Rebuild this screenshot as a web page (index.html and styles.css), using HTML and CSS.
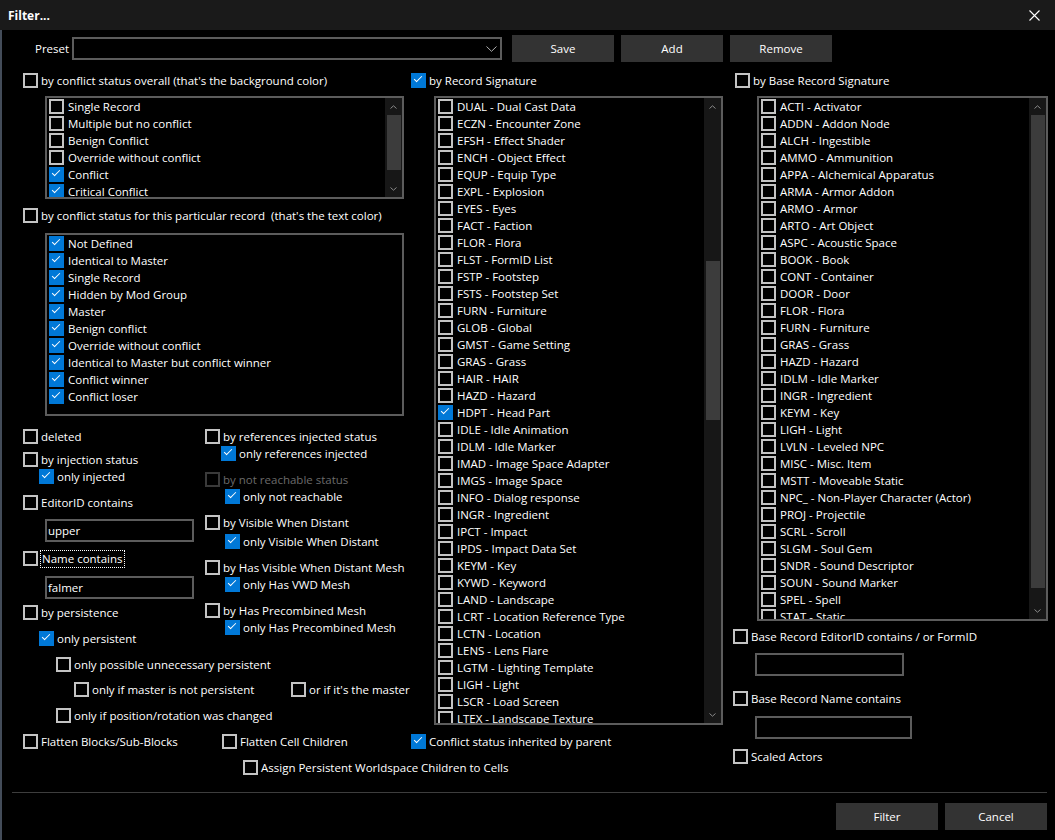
FILE: index.html
```html
<!DOCTYPE html>
<html lang="en">

<head>
    <meta charset="UTF-8">
    <title>Filter...</title>
    <link rel="stylesheet" href="styles.css">
</head>

<body>
<div class="window">
    <div class="titlebar">
        <span class="title">Filter...</span>
        <svg class="close" width="11" height="11" viewBox="0 0 11 11"><path d="M0.5 0.5L10.5 10.5M10.5 0.5L0.5 10.5" stroke="#fff" stroke-width="1.1"/></svg>
    </div>

    <div class="content">
        <div class="preset-row">
            <span class="preset-label">Preset</span>
            <div class="combo">
                <svg width="11" height="6" viewBox="0 0 11 6"><path d="M0.5 0.5L5.5 5.3L10.5 0.5" fill="none" stroke="#b0b0b0" stroke-width="1"/></svg>
            </div>
            <button class="btn first">Save</button>
            <button class="btn">Add</button>
            <button class="btn">Remove</button>
        </div>

        <div class="columns">
            <!-- conflict status column -->
            <div class="col col-status">
                <div class="cb"><span class="box"></span>by conflict status overall (that's the background color)</div>
                <div class="list list-overall">
                    <div class="items">
                        <div class="item"><span class="box"></span>Single Record</div>
                        <div class="item"><span class="box"></span>Multiple but no conflict</div>
                        <div class="item"><span class="box"></span>Benign Conflict</div>
                        <div class="item"><span class="box"></span>Override without conflict</div>
                        <div class="item"><span class="box on"></span>Conflict</div>
                        <div class="item"><span class="box on"></span>Critical Conflict</div>
                    </div>
                    <div class="scrollbar">
                        <div class="arrow"><svg width="7" height="4" viewBox="0 0 7 4"><path d="M0.5 3.5L3.5 0.8L6.5 3.5" fill="none" stroke="#8a8a8a"/></svg></div>
                        <div class="track"><div class="thumb" style="margin-top:0;height:55px"></div></div>
                        <div class="arrow"><svg width="7" height="4" viewBox="0 0 7 4"><path d="M0.5 0.5L3.5 3.2L6.5 0.5" fill="none" stroke="#8a8a8a"/></svg></div>
                    </div>
                </div>

                <div class="cb mt-8"><span class="box"></span>by conflict status for this particular record&nbsp; (that's the text color)</div>
                <div class="list list-record">
                    <div class="items">
                        <div class="item"><span class="box on"></span>Not Defined</div>
                        <div class="item"><span class="box on"></span>Identical to Master</div>
                        <div class="item"><span class="box on"></span>Single Record</div>
                        <div class="item"><span class="box on"></span>Hidden by Mod Group</div>
                        <div class="item"><span class="box on"></span>Master</div>
                        <div class="item"><span class="box on"></span>Benign conflict</div>
                        <div class="item"><span class="box on"></span>Override without conflict</div>
                        <div class="item"><span class="box on"></span>Identical to Master but conflict winner</div>
                        <div class="item"><span class="box on"></span>Conflict winner</div>
                        <div class="item"><span class="box on"></span>Conflict loser</div>
                    </div>
                </div>

                <div class="options">
                    <div class="opt-left">
                        <div class="cb"><span class="box"></span>deleted</div>
                        <div class="cb mt-6"><span class="box"></span>by injection status</div>
                        <div class="cb in-16"><span class="box on"></span>only injected</div>
                        <div class="cb mt-9"><span class="box"></span>EditorID contains</div>
                        <div class="field mt-8">upper</div>
                        <div class="cb mt-8"><span class="box"></span><span class="focus">Name contains</span></div>
                        <div class="field mt-9">falmer</div>
                        <div class="cb mt-5"><span class="box"></span>by persistence</div>
                        <div class="cb mt-9 in-16"><span class="box on"></span>only persistent</div>
                        <div class="cb mt-9 in-33"><span class="box"></span>only possible unnecessary persistent</div>
                        <div class="pair mt-8 in-51">
                            <div class="cb pair-first"><span class="box"></span>only if master is not persistent</div>
                            <div class="cb"><span class="box"></span>or if it's the master</div>
                        </div>
                        <div class="cb mt-9 in-33"><span class="box"></span>only if position/rotation was changed</div>
                    </div>
                    <div class="opt-right">
                        <div class="cb"><span class="box"></span>by references injected status</div>
                        <div class="cb in-16"><span class="box on"></span>only references injected</div>
                        <div class="cb mt-9 disabled"><span class="box"></span>by not reachable status</div>
                        <div class="cb in-20"><span class="box on"></span>only not reachable</div>
                        <div class="cb mt-9"><span class="box"></span>by Visible When Distant</div>
                        <div class="cb mt-2 in-20"><span class="box on"></span>only Visible When Distant</div>
                        <div class="cb mt-9"><span class="box"></span>by Has Visible When Distant Mesh</div>
                        <div class="cb in-20"><span class="box on"></span>only Has VWD Mesh</div>
                        <div class="cb mt-9"><span class="box"></span>by Has Precombined Mesh</div>
                        <div class="cb in-20"><span class="box on"></span>only Has Precombined Mesh</div>
                    </div>
                </div>
            </div>

            <!-- record signature column -->
            <div class="col col-sig">
                <div class="cb"><span class="box on"></span>by Record Signature</div>
                <div class="list list-sig">
                    <div class="items">
                        <div class="item"><span class="box"></span>DUAL - Dual Cast Data</div>
                        <div class="item"><span class="box"></span>ECZN - Encounter Zone</div>
                        <div class="item"><span class="box"></span>EFSH - Effect Shader</div>
                        <div class="item"><span class="box"></span>ENCH - Object Effect</div>
                        <div class="item"><span class="box"></span>EQUP - Equip Type</div>
                        <div class="item"><span class="box"></span>EXPL - Explosion</div>
                        <div class="item"><span class="box"></span>EYES - Eyes</div>
                        <div class="item"><span class="box"></span>FACT - Faction</div>
                        <div class="item"><span class="box"></span>FLOR - Flora</div>
                        <div class="item"><span class="box"></span>FLST - FormID List</div>
                        <div class="item"><span class="box"></span>FSTP - Footstep</div>
                        <div class="item"><span class="box"></span>FSTS - Footstep Set</div>
                        <div class="item"><span class="box"></span>FURN - Furniture</div>
                        <div class="item"><span class="box"></span>GLOB - Global</div>
                        <div class="item"><span class="box"></span>GMST - Game Setting</div>
                        <div class="item"><span class="box"></span>GRAS - Grass</div>
                        <div class="item"><span class="box"></span>HAIR - HAIR</div>
                        <div class="item"><span class="box"></span>HAZD - Hazard</div>
                        <div class="item"><span class="box on"></span>HDPT - Head Part</div>
                        <div class="item"><span class="box"></span>IDLE - Idle Animation</div>
                        <div class="item"><span class="box"></span>IDLM - Idle Marker</div>
                        <div class="item"><span class="box"></span>IMAD - Image Space Adapter</div>
                        <div class="item"><span class="box"></span>IMGS - Image Space</div>
                        <div class="item"><span class="box"></span>INFO - Dialog response</div>
                        <div class="item"><span class="box"></span>INGR - Ingredient</div>
                        <div class="item"><span class="box"></span>IPCT - Impact</div>
                        <div class="item"><span class="box"></span>IPDS - Impact Data Set</div>
                        <div class="item"><span class="box"></span>KEYM - Key</div>
                        <div class="item"><span class="box"></span>KYWD - Keyword</div>
                        <div class="item"><span class="box"></span>LAND - Landscape</div>
                        <div class="item"><span class="box"></span>LCRT - Location Reference Type</div>
                        <div class="item"><span class="box"></span>LCTN - Location</div>
                        <div class="item"><span class="box"></span>LENS - Lens Flare</div>
                        <div class="item"><span class="box"></span>LGTM - Lighting Template</div>
                        <div class="item"><span class="box"></span>LIGH - Light</div>
                        <div class="item"><span class="box"></span>LSCR - Load Screen</div>
                        <div class="item"><span class="box"></span>LTEX - Landscape Texture</div>
                    </div>
                    <div class="scrollbar">
                        <div class="arrow"><svg width="7" height="4" viewBox="0 0 7 4"><path d="M0.5 3.5L3.5 0.8L6.5 3.5" fill="none" stroke="#8a8a8a"/></svg></div>
                        <div class="track"><div class="thumb" style="margin-top:146px;height:159px"></div></div>
                        <div class="arrow"><svg width="7" height="4" viewBox="0 0 7 4"><path d="M0.5 0.5L3.5 3.2L6.5 0.5" fill="none" stroke="#8a8a8a"/></svg></div>
                    </div>
                </div>
            </div>

            <!-- base record column -->
            <div class="col col-base">
                <div class="cb in-2"><span class="box"></span>by Base Record Signature</div>
                <div class="list list-base">
                    <div class="items">
                        <div class="item"><span class="box"></span>ACTI - Activator</div>
                        <div class="item"><span class="box"></span>ADDN - Addon Node</div>
                        <div class="item"><span class="box"></span>ALCH - Ingestible</div>
                        <div class="item"><span class="box"></span>AMMO - Ammunition</div>
                        <div class="item"><span class="box"></span>APPA - Alchemical Apparatus</div>
                        <div class="item"><span class="box"></span>ARMA - Armor Addon</div>
                        <div class="item"><span class="box"></span>ARMO - Armor</div>
                        <div class="item"><span class="box"></span>ARTO - Art Object</div>
                        <div class="item"><span class="box"></span>ASPC - Acoustic Space</div>
                        <div class="item"><span class="box"></span>BOOK - Book</div>
                        <div class="item"><span class="box"></span>CONT - Container</div>
                        <div class="item"><span class="box"></span>DOOR - Door</div>
                        <div class="item"><span class="box"></span>FLOR - Flora</div>
                        <div class="item"><span class="box"></span>FURN - Furniture</div>
                        <div class="item"><span class="box"></span>GRAS - Grass</div>
                        <div class="item"><span class="box"></span>HAZD - Hazard</div>
                        <div class="item"><span class="box"></span>IDLM - Idle Marker</div>
                        <div class="item"><span class="box"></span>INGR - Ingredient</div>
                        <div class="item"><span class="box"></span>KEYM - Key</div>
                        <div class="item"><span class="box"></span>LIGH - Light</div>
                        <div class="item"><span class="box"></span>LVLN - Leveled NPC</div>
                        <div class="item"><span class="box"></span>MISC - Misc. Item</div>
                        <div class="item"><span class="box"></span>MSTT - Moveable Static</div>
                        <div class="item"><span class="box"></span>NPC_ - Non-Player Character (Actor)</div>
                        <div class="item"><span class="box"></span>PROJ - Projectile</div>
                        <div class="item"><span class="box"></span>SCRL - Scroll</div>
                        <div class="item"><span class="box"></span>SLGM - Soul Gem</div>
                        <div class="item"><span class="box"></span>SNDR - Sound Descriptor</div>
                        <div class="item"><span class="box"></span>SOUN - Sound Marker</div>
                        <div class="item"><span class="box"></span>SPEL - Spell</div>
                        <div class="item"><span class="box"></span>STAT - Static</div>
                    </div>
                    <div class="scrollbar">
                        <div class="arrow"><svg width="7" height="4" viewBox="0 0 7 4"><path d="M0.5 3.5L3.5 0.8L6.5 3.5" fill="none" stroke="#8a8a8a"/></svg></div>
                        <div class="track"><div class="thumb" style="margin-top:0;height:473px"></div></div>
                        <div class="arrow"><svg width="7" height="4" viewBox="0 0 7 4"><path d="M0.5 0.5L3.5 3.2L6.5 0.5" fill="none" stroke="#8a8a8a"/></svg></div>
                    </div>
                </div>

                <div class="cb mt-7"><span class="box"></span>Base Record EditorID contains / or FormID</div>
                <div class="field field-base mt-8"></div>
                <div class="cb mt-14"><span class="box"></span>Base Record Name contains</div>
                <div class="field field-base wide mt-9"></div>
                <div class="cb mt-9"><span class="box"></span>Scaled Actors</div>
            </div>

            <!-- flatten options under the first two columns -->
            <div class="flatten">
                <div class="flatten-row">
                    <div class="cb w-199"><span class="box"></span>Flatten Blocks/Sub-Blocks</div>
                    <div class="cb w-189"><span class="box"></span>Flatten Cell Children</div>
                    <div class="cb"><span class="box on"></span>Conflict status inherited by parent</div>
                </div>
                <div class="cb mt-9 in-220"><span class="box"></span>Assign Persistent Worldspace Children to Cells</div>
            </div>
        </div>

        <div class="separator"></div>

        <div class="footer">
            <button class="btn">Filter</button>
            <button class="btn">Cancel</button>
        </div>
    </div>
</div>
</body>

</html>
```

FILE: styles.css
```css
body {
    margin: 0;
    background: #000;
    color: #fff;
    font-family: "Open Sans", "Noto Sans", sans-serif;
    font-size: 11.5px;
}

.window {
    width: 1055px;
    height: 840px;
    display: flex;
    flex-direction: column;
    overflow: hidden;
    background: #000;
}

.titlebar {
    height: 30px;
    flex-shrink: 0;
    background: #1a1a1a;
    display: flex;
    align-items: center;
    justify-content: space-between;
    padding: 0 15px 0 8px;
}

.title {
    font-weight: 700;
    font-size: 12px;
}

.content {
    flex: 1;
    border-left: 2px solid #434c59;
    padding: 5px 8px 0 21px;
}

/* preset row */
.preset-row {
    display: flex;
    align-items: center;
    height: 27px;
}

.preset-label {
    margin-left: 12px;
    width: 37px;
}

.combo {
    width: 430px;
    height: 23px;
    box-sizing: border-box;
    border: 2px solid #5c5c5c;
    display: flex;
    align-items: center;
    justify-content: flex-end;
    padding-right: 3px;
}

.btn {
    width: 102px;
    height: 27px;
    background: #333;
    border: none;
    color: #fff;
    font: inherit;
    margin-left: 7px;
    padding: 0;
}

.btn.first {
    margin-left: 10px;
}

/* columns */
.columns {
    display: grid;
    grid-template-columns: 388px 322px 1fr;
    margin-top: 10px;
}

.col-base {
    grid-column: 3;
    grid-row: 1 / span 2;
    align-self: start;
}

.flatten {
    grid-column: 1 / span 2;
    grid-row: 2;
    margin-top: 8px;
}

.flatten-row {
    display: flex;
}

/* checkboxes */
.cb {
    display: flex;
    align-items: center;
    height: 17px;
    gap: 3px;
    white-space: nowrap;
}

.box {
    width: 15px;
    height: 15px;
    box-sizing: border-box;
    border: 2px solid #c4c4c4;
    flex-shrink: 0;
    position: relative;
}

.box.on {
    background: #0078d7;
    border-color: #0078d7;
}

.box.on::after {
    content: "";
    position: absolute;
    left: 3px;
    top: -1px;
    width: 3px;
    height: 7px;
    border: solid #fff;
    border-width: 0 1.4px 1.4px 0;
    transform: rotate(45deg);
}

.disabled {
    color: #6b6b6b;
}

.disabled .box {
    border-color: #3a3a3a;
}

.focus {
    outline: 1px dotted #fff;
    outline-offset: 0;
    padding: 0 1px;
    line-height: 16px;
}

/* lists */
.list {
    display: flex;
    box-sizing: border-box;
    border: 2px solid #5c5c5c;
    overflow: hidden;
    margin-top: 7px;
}

.items {
    flex: 1;
    padding-left: 2px;
    overflow: hidden;
}

.item {
    display: flex;
    align-items: center;
    height: 17px;
    gap: 4px;
    white-space: nowrap;
}

.list-overall {
    margin-left: 22px;
    width: 359px;
    height: 103px;
}

.list-record {
    margin-left: 22px;
    margin-top: 9px;
    width: 359px;
    height: 183px;
}

.list-sig {
    margin-left: 23px;
    width: 289px;
    height: 629px;
}

.list-base {
    margin-left: 24px;
    width: 291px;
    height: 525px;
}

.scrollbar {
    width: 17px;
    flex-shrink: 0;
    background: #171717;
    display: flex;
    flex-direction: column;
}

.arrow {
    height: 17px;
    flex-shrink: 0;
    display: flex;
    align-items: center;
    justify-content: center;
}

.track {
    flex: 1;
    overflow: hidden;
}

.thumb {
    margin-left: 2px;
    margin-right: 1px;
    background: #3c3c3c;
}

/* options under the lists */
.options {
    display: grid;
    grid-template-columns: 182px 1fr;
    margin-top: 12px;
}

.field {
    width: 149px;
    height: 23px;
    box-sizing: border-box;
    border: 2px solid #5c5c5c;
    margin-left: 22px;
    padding-left: 1px;
    line-height: 19px;
}

.field-base {
    width: 149px;
}

.field-base.wide {
    width: 157px;
}

.pair {
    display: flex;
}

.pair-first {
    width: 217px;
    flex-shrink: 0;
}

.separator {
    height: 1px;
    background: #3d3d3d;
    margin: 16px 0 0 -11px;
}

.footer {
    display: flex;
    justify-content: flex-end;
    margin-top: 10px;
}

/* spacing helpers */
.mt-2 { margin-top: 2px; }
.mt-5 { margin-top: 5px; }
.mt-6 { margin-top: 6px; }
.mt-7 { margin-top: 7px; }
.mt-8 { margin-top: 8px; }
.mt-9 { margin-top: 9px; }
.mt-14 { margin-top: 14px; }

.in-2 { padding-left: 2px; }
.in-16 { padding-left: 16px; }
.in-20 { padding-left: 20px; }
.in-33 { padding-left: 33px; }
.in-51 { padding-left: 51px; }
.in-220 { padding-left: 220px; }

.w-199 { width: 199px; }
.w-189 { width: 189px; }
```
